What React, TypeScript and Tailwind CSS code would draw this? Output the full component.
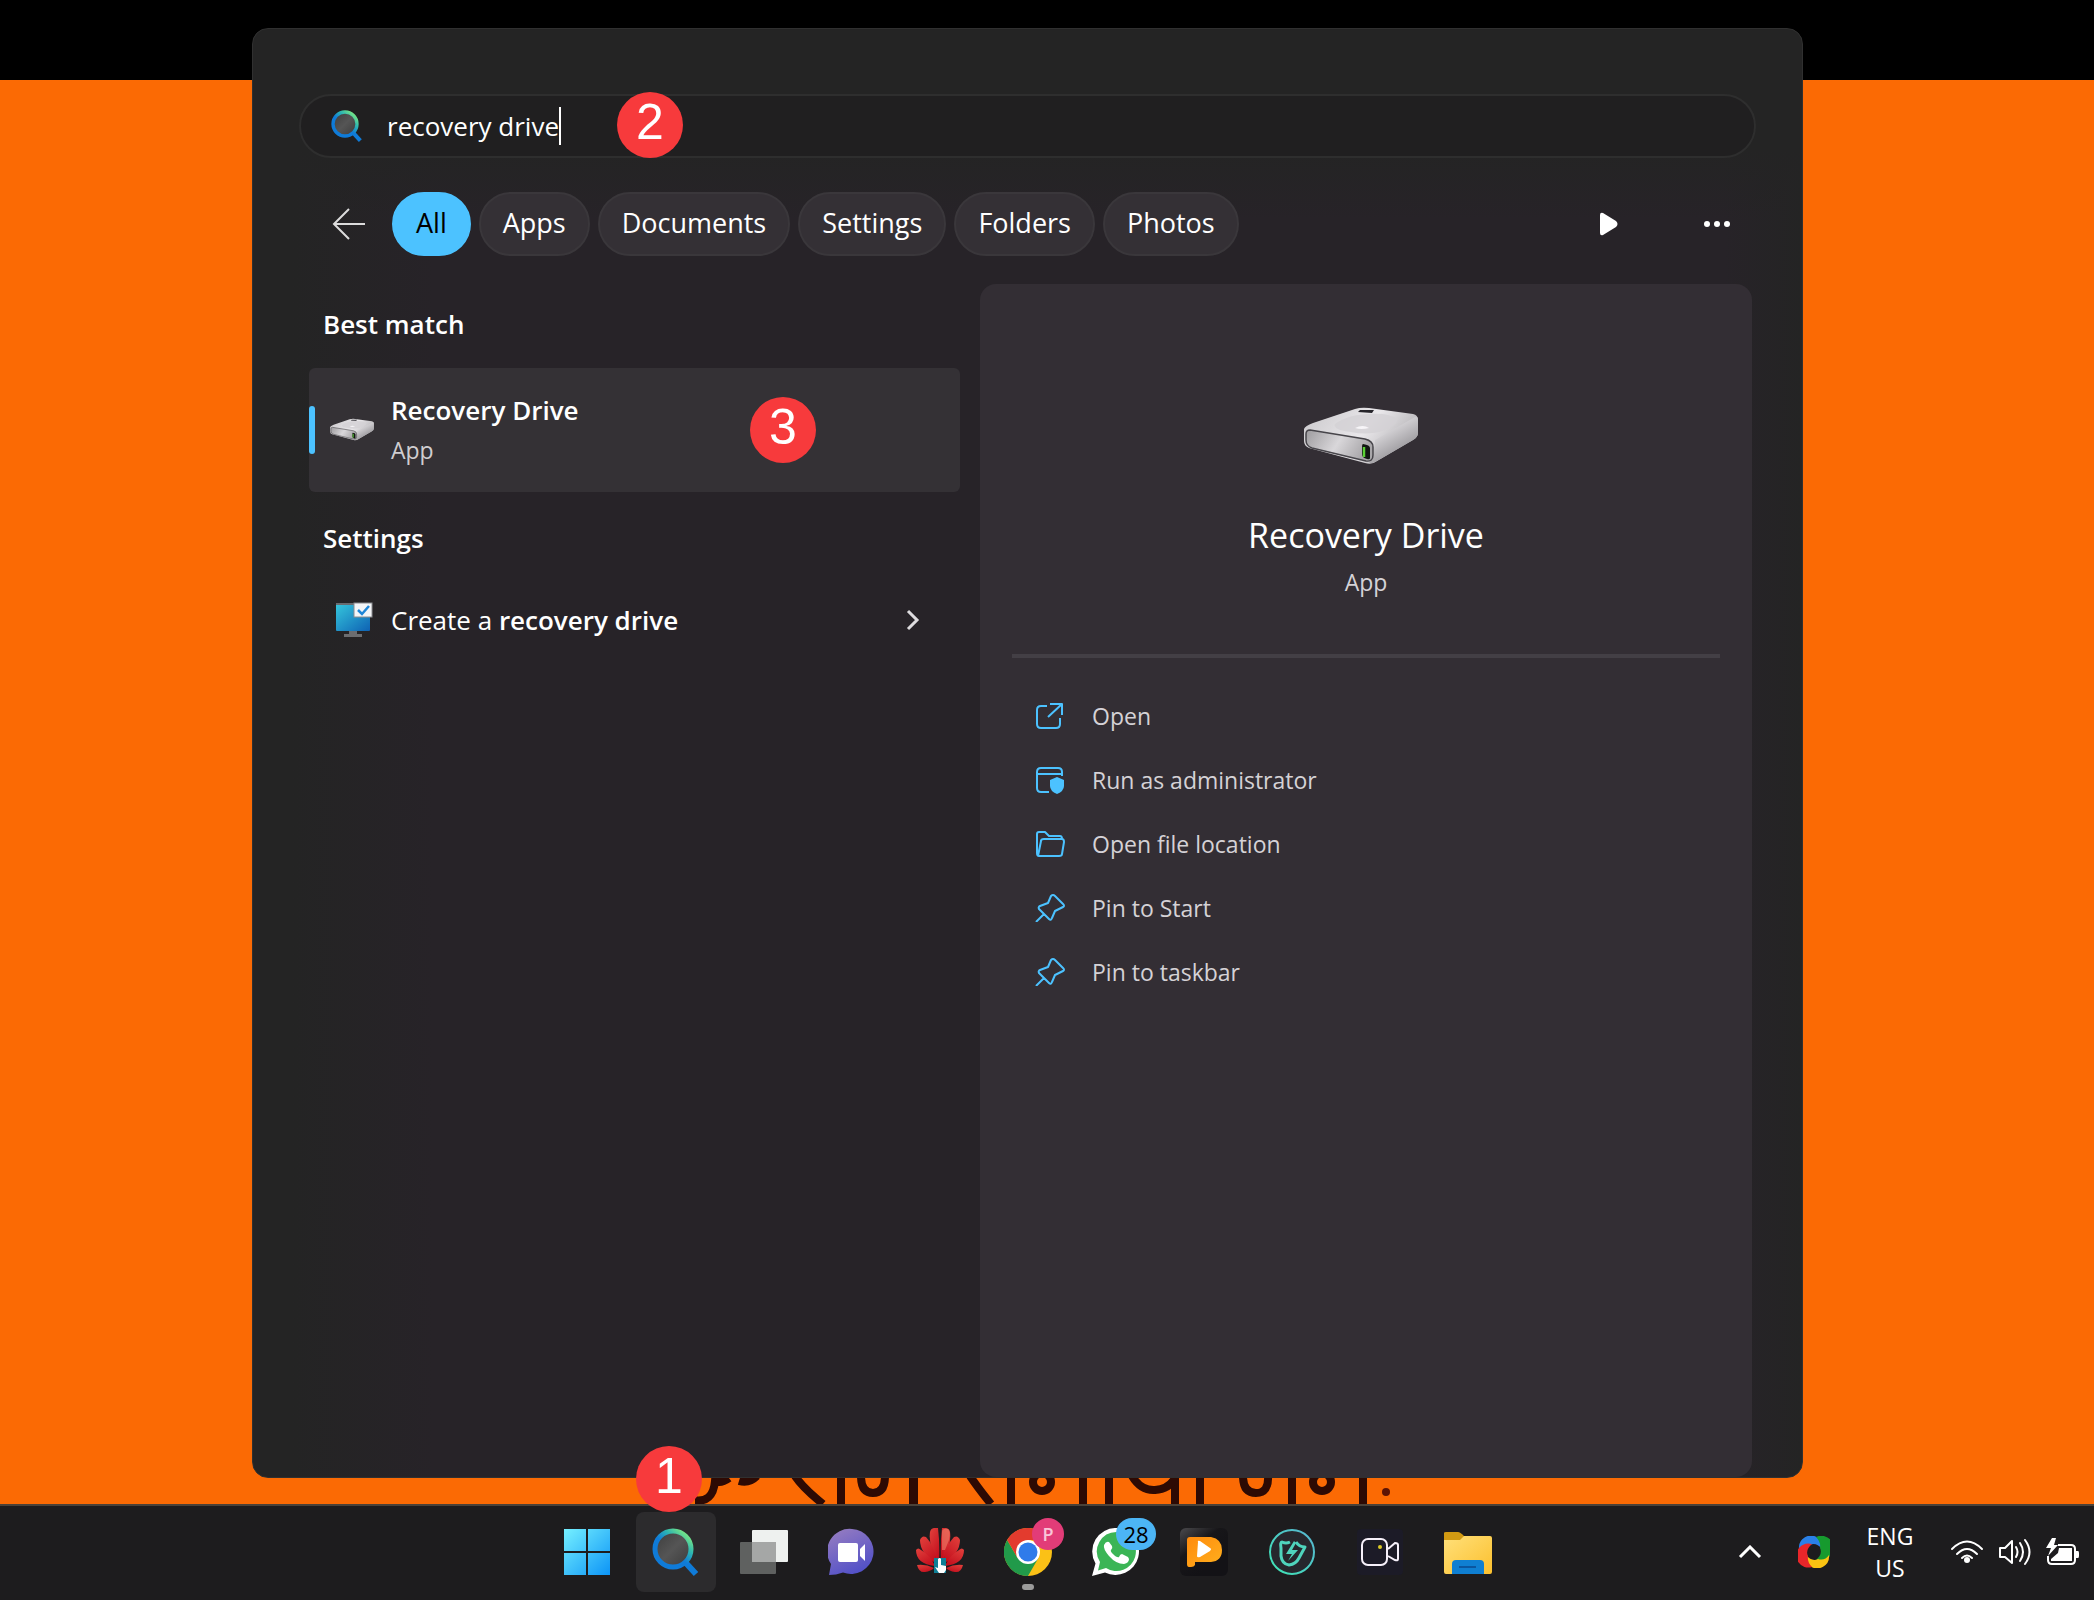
import { useState } from 'react';
import type { ReactNode } from 'react';

interface StepBadgeProps {
    step: number;
    className?: string;
}

const StepBadge = ({ step, className = '' }: StepBadgeProps) => (
    <span
        className={`pointer-events-none absolute z-20 flex h-[66px] w-[66px] items-center justify-center rounded-full bg-[#f73a3c] pb-1.5 font-['Liberation_Sans',sans-serif] text-[50px] leading-none text-white ${className}`}
    >
        {step}
    </span>
);

const SearchIcon = ({ className = '' }: { className?: string }) => (
    <svg viewBox="0 0 48 50" className={className} aria-hidden="true">
        <defs>
            <linearGradient id="ring" x1="0.15" y1="0.9" x2="0.85" y2="0.1">
                <stop offset="0.45" stopColor="#0f7bd8" />
                <stop offset="0.75" stopColor="#2fb8b0" />
                <stop offset="1" stopColor="#6fe08a" />
            </linearGradient>
            <linearGradient id="lens" x1="0" y1="0" x2="1" y2="1">
                <stop offset="0" stopColor="#3c3c3c" />
                <stop offset="0.5" stopColor="#555" />
                <stop offset="1" stopColor="#3a3a3a" />
            </linearGradient>
        </defs>
        <path d="M33 35 44 47" stroke="#0f7bd8" strokeWidth="6" />
        <circle cx="21" cy="22" r="18" fill="url(#lens)" stroke="url(#ring)" strokeWidth="5" />
    </svg>
);

const DriveIcon = ({ className = '' }: { className?: string }) => (
    <svg viewBox="0 0 120 62" className={className} aria-hidden="true">
        <defs>
            <linearGradient id="driveTop" x1="0" y1="0" x2="1" y2="0.4">
                <stop offset="0" stopColor="#c9c7ca" />
                <stop offset="0.6" stopColor="#e9e7ea" />
                <stop offset="1" stopColor="#b5b3b6" />
            </linearGradient>
            <linearGradient id="driveFront" x1="0" y1="0" x2="1" y2="0.3">
                <stop offset="0" stopColor="#9d9b9e" />
                <stop offset="0.55" stopColor="#d9d7da" />
                <stop offset="1" stopColor="#a9a7aa" />
            </linearGradient>
            <linearGradient id="driveSide" x1="0" y1="0.2" x2="0.5" y2="1">
                <stop offset="0" stopColor="#f2f0f3" />
                <stop offset="1" stopColor="#8e8c90" />
            </linearGradient>
        </defs>
        <path d="M3 23 Q4 20 12 17 L54 3 Q60 1 68 2 L112 8 Q117 9 117 14 V27 Q117 31 112 34 L76 55 Q71 59 64 57 L8 42 Q3 40 3 35Z" fill="url(#driveTop)" />
        <path d="M74 34 L114 11 Q117 10 117 14 V27 Q117 31 112 34 L76 55 Q71 58 68 57 Q73 52 73 45Z" fill="url(#driveSide)" />
        <path d="M34 18 Q50 6 82 8 Q104 12 92 20 Q74 31 50 26 Q32 24 34 18Z" fill="#d3d1d4" opacity="0.8" />
        <path d="M54 22 Q62 18 68 22 Q60 24 54 22Z" fill="#f7f5f8" />
        <path d="M59 4 73 4 71 7 57 6Z" fill="#26242a" />
        <path d="M9 24 L64 33 Q72 35 72 41 V49 Q72 56 65 55 L11 42 Q5 40 5 34 V28 Q5 24 9 24Z" fill="url(#driveFront)" stroke="#47454a" strokeWidth="1.5" />
        <path d="M62 38 Q69 39 69 42 V52 Q69 54 66 53 Q61 52 61 48V41Q61 38 62 38Z" fill="#121613" />
        <path d="M63 41 V51" stroke="#5bd235" strokeWidth="2.5" />
    </svg>
);

const MonitorIcon = () => (
    <svg viewBox="0 0 38 36" className="h-9 w-[38px]" aria-hidden="true">
        <defs>
            <linearGradient id="screen" x1="0" y1="0" x2="1" y2="1">
                <stop offset="0" stopColor="#35c6dc" />
                <stop offset="1" stopColor="#0e62b4" />
            </linearGradient>
        </defs>
        <rect x="1" y="2" width="34" height="27" rx="1" fill="url(#screen)" />
        <path d="M1 2H36" stroke="#686b70" strokeWidth="2" />
        <path d="M14 29h8v3h5v3H9v-3h5z" fill="#6c6d70" />
        <rect x="19" y="1" width="18" height="14" fill="#f3f5f8" stroke="#8a8c90" />
        <path d="m23 8 4 4 7-8" fill="none" stroke="#1f86d8" strokeWidth="2.5" />
    </svg>
);

const lineIcon = 'h-7 w-[30px] fill-none stroke-[#4cc2ff] stroke-2';

const OpenIcon = () => (
    <svg viewBox="0 0 30 28" className={lineIcon} aria-hidden="true">
        <path d="M12 4H6Q2 4 2 8V22Q2 26 6 26H21Q25 26 25 22V16M15 2H27V13M27 2 13 15" strokeLinejoin="round" />
    </svg>
);

const AdminIcon = () => (
    <svg viewBox="0 0 30 28" className={lineIcon} aria-hidden="true">
        <path d="M14 26H6Q2 26 2 22V6Q2 2 6 2H23Q27 2 27 6V10M2 8H27" />
        <path d="m22 11 7 3v6q0 5-7 8-7-3-7-8v-6Z" fill="#4cc2ff" stroke="none" />
    </svg>
);

const FolderOpenIcon = () => (
    <svg viewBox="0 0 30 28" className={lineIcon} aria-hidden="true">
        <path d="M2 23V4Q2 2 4 2H10L14 6H25Q27 6 27 9M3 26 6 11Q6 9 9 9H27Q29 9 29 12L27 24Q27 26 24 26H4Q2 26 2 23" strokeLinejoin="round" />
    </svg>
);

const PinIcon = () => (
    <svg viewBox="0 0 30 28" className={lineIcon} aria-hidden="true">
        <path d="M16 2Q18 0 20 2L28 10Q30 12 28 13L20 17 17 24Q16 27 14 25L4 15Q3 13 5 12L13 9ZM9 20 1 28" strokeLinejoin="round" />
    </svg>
);

const StartIcon = () => (
    <svg viewBox="0 0 48 48" className="size-12" aria-hidden="true">
        <defs>
            <linearGradient id="start" gradientUnits="userSpaceOnUse" x1="1" y1="1" x2="47" y2="47">
                <stop offset="0" stopColor="#74efff" />
                <stop offset="1" stopColor="#0b93f6" />
            </linearGradient>
        </defs>
        <path d="M0 1h22v22H0zM24 1h22v22H24zM0 25h22v22H0zM24 25h22v22H24z" fill="url(#start)" />
    </svg>
);

const TaskViewIcon = () => (
    <svg viewBox="0 0 48 48" className="size-12" aria-hidden="true">
        <rect x="12" y="2" width="36" height="32" rx="1" fill="#eef1ef" />
        <rect x="0" y="14" width="36" height="32" rx="1" fill="#6b6d6c" opacity="0.85" />
        <rect x="12" y="14" width="24" height="20" fill="#a5a7a6" />
    </svg>
);

const ChatIcon = () => (
    <svg viewBox="0 0 48 48" className="size-12" aria-hidden="true">
        <defs>
            <linearGradient id="chat" x1="0" y1="0" x2="0.5" y2="1">
                <stop offset="0" stopColor="#9a7fc0" />
                <stop offset="1" stopColor="#5452c8" />
            </linearGradient>
        </defs>
        <path d="M24 1a22.500 22.500 0 1 1-9 43.500Q8 47 1 47L3 36A22.500 22.500 0 0 1 24 1Z" fill="url(#chat)" />
        <rect x="10" y="15" width="20" height="19" rx="2" fill="#fff" />
        <path d="M32 21 37 16V33L32 28Z" fill="#fff" />
    </svg>
);

const petals = (
    <>
        <path d="M23 35Q12 18 14 4 15-1 22 0 24 16 23 35Z" />
        <path d="M21 36Q4 26 4 12 6 7 10 9 19 18 21 36Z" />
        <path d="M19 38Q0 36 0 22 2 19 5 22 15 28 19 38Z" />
        <path d="M18 40Q10 36 1 37 3 45 9 44 15 43 18 40Z" />
    </>
);

const HuaweiIcon = () => (
    <svg viewBox="0 0 48 48" className="size-12" aria-hidden="true">
        <defs>
            <linearGradient id="petal" x1="0" y1="0" x2="0.6" y2="1">
                <stop offset="0" stopColor="#e2413c" />
                <stop offset="1" stopColor="#c4101e" />
            </linearGradient>
        </defs>
        <g fill="url(#petal)">{petals}</g>
        <g fill="url(#petal)" transform="translate(48 0) scale(-1 1)">{petals}</g>
        <path d="M26 4Q26 0 32 1 35 4 33 12L29 22H26Z" fill="#f0806a" opacity="0.6" />
        <rect x="18" y="30" width="12" height="15" fill="#0f7f96" />
        <path d="M22 31q2-2 3 0v6l5 1v4l-2 3h-5l-4-6 3 1z" fill="#fff" />
    </svg>
);

const ChromeIcon = () => (
    <svg viewBox="0 0 48 48" className="size-12" aria-hidden="true">
        <circle cx="24" cy="24" r="24" fill="#fbc116" />
        <path d="M3.200 12A24 24 0 0 0 24 48L34.400 30 24 24 13.600 30Z" fill="#219a4a" />
        <path d="M3.200 12 13.600 30 24 24V12H44.800A24 24 0 0 0 3.200 12Z" fill="#e33b2e" />
        <circle cx="24" cy="24" r="12" fill="#fff" />
        <circle cx="24" cy="24" r="9.500" fill="#2f7bea" />
    </svg>
);

const WhatsAppIcon = () => (
    <svg viewBox="0 0 48 48" className="size-12" aria-hidden="true">
        <path d="M24.500 0A23.500 23.500 0 1 1 13 44.500L0 48 3.500 35.500A23.500 23.500 0 0 1 24.500 0Z" fill="#fff" />
        <path d="M24.500 4A19.500 19.500 0 1 1 14 40L6 42.500 8 34A19.500 19.500 0 0 1 24.500 4Z" fill="#3bb556" />
        <path d="M17 14q-3-1-5 3-1 4 5 11 7 8 15 8 5-1 5-5l-1-2-6-3q-2 0-3 3-2 1-6-3-3-3-2-4 2-2 1-4Z" fill="#fff" />
    </svg>
);

const PlayerIcon = () => (
    <svg viewBox="0 0 48 48" className="size-12" aria-hidden="true">
        <defs>
            <linearGradient id="tile" x1="0" y1="0" x2="0.6" y2="0.8">
                <stop offset="0" stopColor="#4b4a4d" />
                <stop offset="0.5" stopColor="#171619" />
                <stop offset="1" stopColor="#131216" />
            </linearGradient>
            <linearGradient id="playerLogo" x1="0" y1="0" x2="1" y2="1">
                <stop offset="0" stopColor="#ff8a0c" />
                <stop offset="1" stopColor="#ffb01e" />
            </linearGradient>
        </defs>
        <rect width="48" height="48" rx="6" fill="url(#tile)" />
        <path d="M10 9H31Q42 11 42 22T31 34H15V37Q14 39 11 39H9Q7 39 7 36V12Q7 9 10 9Z" fill="url(#playerLogo)" />
        <path d="M18 14Q17 12 20 13L30 20Q32 21 30 23L20 29Q17 30 17 28Z" fill="#fff" />
    </svg>
);

const ShieldIcon = () => (
    <svg viewBox="0 0 48 48" className="size-12" aria-hidden="true">
        <defs>
            <linearGradient id="shield" x1="0" y1="1" x2="1" y2="0">
                <stop offset="0" stopColor="#3ee6b4" />
                <stop offset="1" stopColor="#58b4d2" />
            </linearGradient>
        </defs>
        <circle cx="24" cy="24" r="22" fill="#26272d" stroke="url(#shield)" strokeWidth="2" />
        <path d="M22 14Q18 16 14 14Q12 14 13 20V28Q14 36 21 37Q28 36 31 30L37 19Q31 19 28 14" fill="none" stroke="#4fd4bd" strokeWidth="3" strokeLinejoin="round" />
        <path d="M26 13 18 26H24L20 33 30 22H24L28 15Z" fill="#4fd4bd" />
    </svg>
);

const CameraIcon = () => (
    <svg viewBox="0 0 48 48" className="size-12" aria-hidden="true">
        <rect x="1" y="1" width="46" height="46" rx="4" fill="#1c1b27" />
        <rect x="6" y="11" width="25" height="26" rx="6" fill="none" stroke="#f6f0fa" strokeWidth="2" />
        <path d="M32 21 39 15Q42 15 42 17V31Q42 33 39 32L32 28" fill="none" stroke="#f6f0fa" strokeWidth="2" />
        <circle cx="24" cy="19" r="2" fill="#dcc926" />
    </svg>
);

const ExplorerIcon = () => (
    <svg viewBox="0 0 48 48" className="size-12" aria-hidden="true">
        <defs>
            <linearGradient id="folder" x1="0" y1="0" x2="1" y2="1">
                <stop offset="0" stopColor="#ffe07a" />
                <stop offset="1" stopColor="#fcc02e" />
            </linearGradient>
        </defs>
        <path d="M0 5Q0 4 2 4H14Q16 4 20 8V18H0Z" fill="#d29a12" />
        <path d="M0 12H16L20 8H46Q48 8 48 10V44Q48 46 46 46H2Q0 46 0 44Z" fill="url(#folder)" />
        <path d="M8 46V36Q8 32 12 32H36Q40 32 40 36V46Z" fill="#0f7fd2" />
        <path d="M15 39H32" stroke="#0a56a0" strokeWidth="2" />
    </svg>
);

const RingIcon = () => (
    <svg viewBox="0 0 32 32" className="size-8" aria-hidden="true">
        <path d="M1 13A12 12 0 0 1 20 2Q25 6 24 13 18 6 12 9 5 9 1 16Z" fill="#2a80e8" />
        <path d="M18 1A12 12 0 0 1 31 21Q25 26 18 24 25 18 22 12 23 6 18 1Z" fill="#169a2e" />
        <path d="M31 19A12 12 0 0 1 12 30Q7 26 8 19 14 26 20 23 27 25 31 19Z" fill="#fbc312" />
        <path d="M14 31A12 12 0 0 1 1 12Q6 6 14 8 7 14 10 20 9 26 14 31Z" fill="#e8262a" />
    </svg>
);

const WifiIcon = () => (
    <svg viewBox="0 0 34 26" className="h-[26px] w-[34px] fill-none stroke-white stroke-2" aria-hidden="true">
        <path d="M2 10Q17-5 32 10M7 15Q17 5 27 15M12 19Q17 14 22 19" strokeLinecap="round" />
        <circle cx="17" cy="21" r="3" fill="#fff" stroke="none" />
    </svg>
);

const SpeakerIcon = () => (
    <svg viewBox="0 0 34 30" className="h-[30px] w-[34px] fill-none stroke-white stroke-2" aria-hidden="true">
        <path d="M2 11H7L14 4V26L7 20H2Z" strokeLinejoin="round" />
        <path d="M18 10Q21 15 18 20M22 6Q28 15 22 24M27 3Q36 15 27 27" strokeLinecap="round" />
    </svg>
);

const BatteryIcon = () => (
    <svg viewBox="0 0 34 28" className="h-7 w-[34px]" aria-hidden="true">
        <path d="M12 7H25Q29 7 29 11V22Q29 26 25 26H6Q2 26 2 22V18" fill="none" stroke="#fff" strokeWidth="2" />
        <path d="M13 10H26V23H5V21L12 15Z" fill="#fff" />
        <path d="M30 13H32Q33 13 33 15V18Q33 20 32 20H30Z" fill="#fff" />
        <path d="M6 0 0 10H5L2 18 12 7H8L10 0Z" fill="#fff" />
    </svg>
);

// lower edge of the brush artwork on the wallpaper
const WallpaperStrokes = () => (
    <svg viewBox="0 0 704 26" className="ml-[443px] h-[26px] w-[704px] fill-none stroke-[#2d0a04] stroke-8" aria-hidden="true">
        <path d="M-2 22Q18 26 20 3Q26 6 34 0M44 3Q54 6 62-2" />
        <path d="M100-2Q108 10 128 26M275-2Q283 10 296 26" />
        <path d="M146 0V26M219 0V26M218 0V26M316 0V26M388 0V26M414 0V26M480 0V26M505 0V26M597 0V26M668 0V26" />
        <path d="M166-2Q166 15 178 15T190-2M548-2Q548 15 561 15T573-2" />
        <circle cx="347" cy="4" r="9" />
        <circle cx="627" cy="4" r="9" />
        <path d="M437-2Q446 13 460 12T480 0" />
        <circle cx="691" cy="14" r="4" fill="#5c1405" stroke="none" />
    </svg>
);

const filters = ['All', 'Apps', 'Documents', 'Settings', 'Folders', 'Photos'];

const actions: { label: string; icon: ReactNode }[] = [
    { label: 'Open', icon: <OpenIcon /> },
    { label: 'Run as administrator', icon: <AdminIcon /> },
    { label: 'Open file location', icon: <FolderOpenIcon /> },
    { label: 'Pin to Start', icon: <PinIcon /> },
    { label: 'Pin to taskbar', icon: <PinIcon /> }
];

const taskbarApps: { label: string; icon: ReactNode; active?: boolean; overlay?: ReactNode }[] = [
    { label: 'Start', icon: <StartIcon /> },
    {
        label: 'Search',
        icon: <SearchIcon className="h-[50px] w-12" />,
        active: true,
        overlay: <StepBadge step={1} className="-top-[66px] left-0" />
    },
    { label: 'Task view', icon: <TaskViewIcon /> },
    { label: 'Chat', icon: <ChatIcon /> },
    { label: 'Huawei', icon: <HuaweiIcon /> },
    {
        label: 'Google Chrome',
        icon: <ChromeIcon />,
        overlay: (
            <>
                <span className="absolute top-1.5 right-1 flex size-8 items-center justify-center rounded-full bg-[#e23c78] text-lg leading-none font-semibold text-[#f9c6d8]">P</span>
                <span className="absolute bottom-0.5 left-1/2 h-1.5 w-3 -translate-x-1/2 rounded-full bg-[#9b9b9b]" />
            </>
        )
    },
    {
        label: 'WhatsApp',
        icon: <WhatsAppIcon />,
        overlay: (
            <span className="absolute top-1.5 right-0 flex h-8 w-10 items-center justify-center rounded-full bg-[#4cb5f5] text-[22px] leading-none text-black">28</span>
        )
    },
    { label: 'Player', icon: <PlayerIcon /> },
    { label: 'PC security', icon: <ShieldIcon /> },
    { label: 'Screen recorder', icon: <CameraIcon /> },
    { label: 'File Explorer', icon: <ExplorerIcon /> }
];

const SearchPanel = () => {
    const [query, setQuery] = useState('recovery drive');
    const [filter, setFilter] = useState('All');

    return (
        <main className="flex flex-1 flex-col overflow-hidden rounded-2xl border border-[#303030] bg-[linear-gradient(to_bottom,#242424_120px,transparent_190px),linear-gradient(to_right,#242424_40px,#272328_180px,#272328_95%,#242424)]">
            <div className="px-[46px] pt-[65px]">
                <div className="relative flex h-16 items-center rounded-full border-2 border-[#2e2e2e] bg-[#201f20] pl-[30px]">
                    <SearchIcon className="h-[34px] w-8" />
                    <input
                        aria-label="Search"
                        value={query}
                        onChange={(e) => setQuery(e.target.value)}
                        className="ml-6 field-sizing-content bg-transparent text-[26px] leading-9 text-white outline-none"
                    />
                    <span className="h-[38px] w-0.5 bg-white" />
                    <StepBadge step={2} className="-top-1 left-[316px]" />
                </div>
            </div>

            <div className="mt-[34px] flex items-center pr-[53px] pl-[77px]">
                <button aria-label="Back" className="mr-[26px] flex h-16 w-9 items-center justify-center">
                    <svg viewBox="0 0 36 32" className="h-8 w-9 fill-none stroke-[#dcdcdc] stroke-2" aria-hidden="true">
                        <path d="M35 16H4M19 1 4 16 19 31" />
                    </svg>
                </button>
                <div className="flex gap-2">
                    {filters.map((name) => (
                        <button
                            key={name}
                            onClick={() => setFilter(name)}
                            className={`h-16 rounded-full border-2 px-[22px] pb-0.5 text-[27px] ${filter === name ? 'border-[#4cc2ff] bg-[#4cc2ff] text-black' : 'border-[#3a373b] bg-[#343035] text-white'}`}
                        >
                            {name}
                        </button>
                    ))}
                </div>
                <button aria-label="Play" className="ml-auto flex h-16 w-16 items-center justify-center">
                    <svg viewBox="0 0 18 24" className="h-6 w-[18px]" aria-hidden="true">
                        <path d="M0 3Q0 0 3 1L16 9Q19 12 16 15L3 23Q0 24 0 21Z" fill="#fff" />
                    </svg>
                </button>
                <button aria-label="More options" className="ml-11 flex h-16 w-16 items-center justify-center">
                    <svg viewBox="0 0 28 8" className="h-2 w-7 fill-white" aria-hidden="true">
                        <circle cx="4" cy="4" r="3" />
                        <circle cx="14" cy="4" r="3" />
                        <circle cx="24" cy="4" r="3" />
                    </svg>
                </button>
            </div>

            <div className="mt-7 grid flex-1 grid-cols-[651fr_772fr] gap-5 pr-[50px] pl-14">
                <section className="pt-5">
                    <h2 className="pl-3.5 text-[26px] leading-10 font-semibold text-white">Best match</h2>
                    <button className="relative mt-6 flex h-[124px] w-full items-center rounded-md bg-[#343135] text-left">
                        <span className="h-12 w-1.5 rounded-full bg-[#4cc2ff]" />
                        <DriveIcon className="ml-3.5 h-6 w-[46px]" />
                        <span className="ml-4 flex flex-col">
                            <span className="text-[26px] leading-10 font-semibold text-white">Recovery Drive</span>
                            <span className="text-[23px] leading-10 text-[#cfcdd0]">App</span>
                        </span>
                        <StepBadge step={3} className="top-[29px] left-[441px]" />
                    </button>
                    <h2 className="mt-[26px] pl-3.5 text-[26px] leading-10 font-semibold text-white">Settings</h2>
                    <button className="mt-[22px] flex h-20 w-full items-center pr-10 pl-[26px] text-left">
                        <MonitorIcon />
                        <span className="ml-[18px] text-[26px] text-white">
                            Create a <span className="font-semibold">recovery drive</span>
                        </span>
                        <svg viewBox="0 0 14 22" className="ml-auto h-[22px] w-3.5 fill-none stroke-[#dedcdf] stroke-3" aria-hidden="true">
                            <path d="m2 2 9 9-9 9" />
                        </svg>
                    </button>
                </section>

                <section className="rounded-2xl bg-[#332e34] px-8">
                    <div className="flex flex-col items-center pt-[122px]">
                        <DriveIcon className="mr-2.5 h-[62px] w-[120px]" />
                        <h1 className="mt-10 text-[34px] leading-[54px] text-white">Recovery Drive</h1>
                        <p className="text-[23px] leading-10 text-[#d5d2d6]">App</p>
                    </div>
                    <hr className="mt-[52px] border-t-4 border-[#433f45]" />
                    <ul className="mt-[26px]">
                        {actions.map((action) => (
                            <li key={action.label}>
                                <button className="flex h-16 w-full items-center gap-[27px] pl-[23px] text-left text-[23px] text-[#d5d2d6]">
                                    {action.icon}
                                    <span>{action.label}</span>
                                </button>
                            </li>
                        ))}
                    </ul>
                </section>
            </div>
        </main>
    );
};

const Taskbar = () => (
    <footer className="flex h-24 items-center border-t-2 border-[#4a4138] bg-[#1d1c1e] pr-3.5 pb-0.5 pl-[548px]">
        <nav aria-label="Taskbar" className="flex gap-2">
            {taskbarApps.map((app) => (
                <button
                    key={app.label}
                    aria-label={app.label}
                    className={`relative flex size-20 items-center justify-center rounded-lg ${app.active ? 'bg-[#2c2b2d]' : ''}`}
                >
                    {app.icon}
                    {app.overlay}
                </button>
            ))}
        </nav>
        <div className="ml-auto flex items-center">
            <button aria-label="Show hidden icons">
                <svg viewBox="0 0 24 14" className="h-3.5 w-6 fill-none stroke-white stroke-3" aria-hidden="true">
                    <path d="m2 12 10-10 10 10" />
                </svg>
            </button>
            <button aria-label="Browser tray" className="ml-9">
                <RingIcon />
            </button>
            <button className="ml-9 flex w-12 flex-col items-center text-[23px] leading-8 text-white">
                <span>ENG</span>
                <span>US</span>
            </button>
            <button aria-label="Network, sound and battery" className="ml-9 flex items-center gap-3.5">
                <WifiIcon />
                <SpeakerIcon />
                <BatteryIcon />
            </button>
        </div>
    </footer>
);

const App = () => (
    <div className="flex min-h-screen flex-col bg-[linear-gradient(to_bottom,#000_80px,#fb6a04_80px)] font-['Open_Sans','Noto_Sans',sans-serif]">
        <div className="flex flex-1 flex-col pt-7 pr-[291px] pl-[252px]">
            <SearchPanel />
            <WallpaperStrokes />
        </div>
        <Taskbar />
    </div>
);

export default App;
